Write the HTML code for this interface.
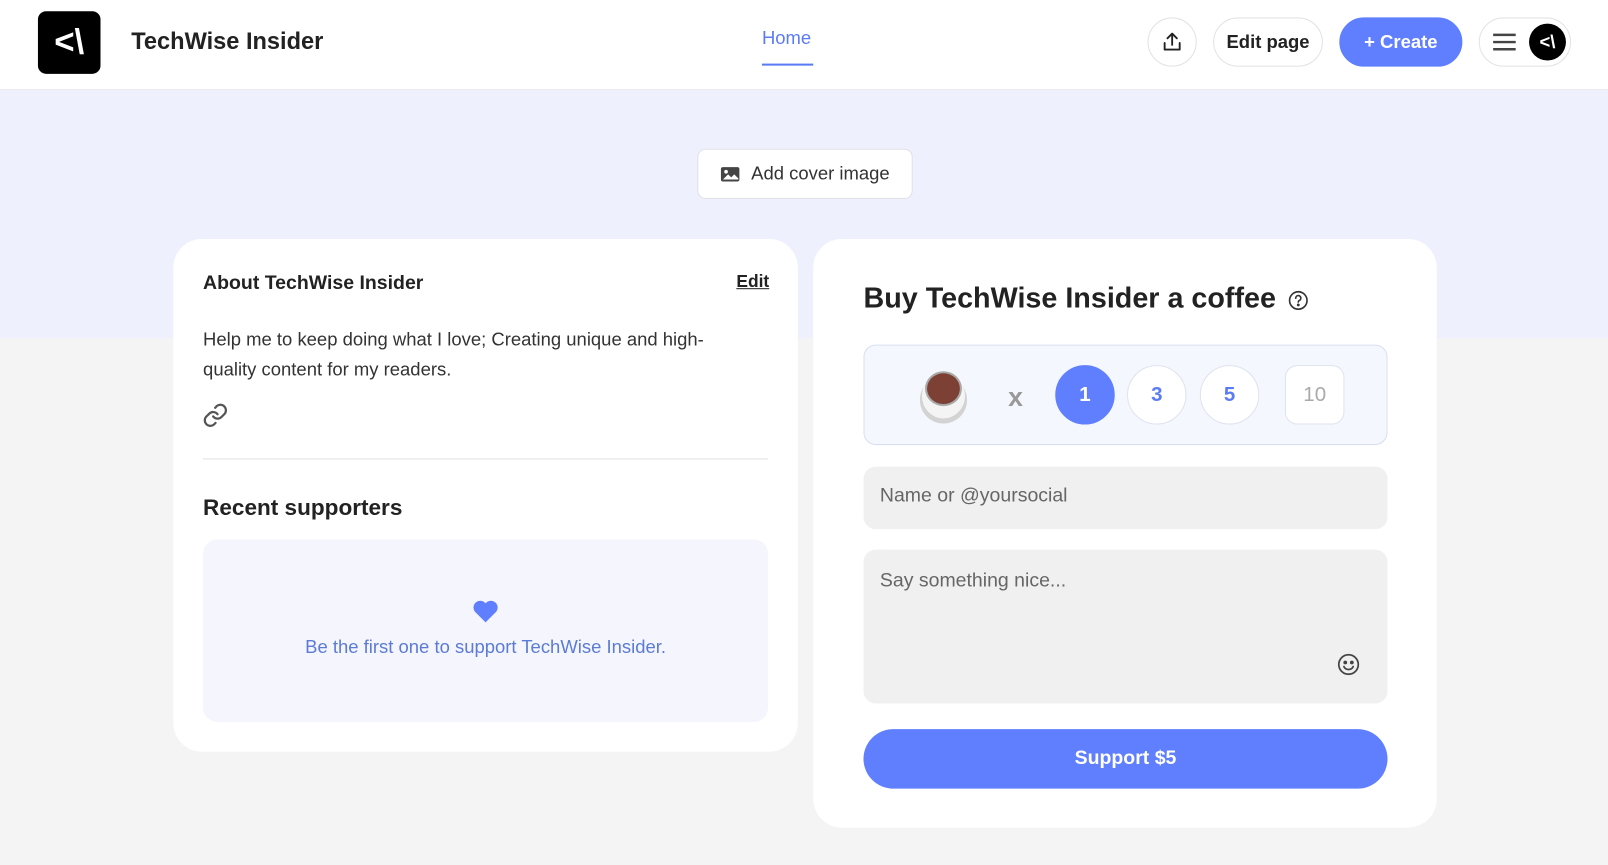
<!DOCTYPE html>
<html><head><meta charset="utf-8"><style>
*{box-sizing:border-box;margin:0;padding:0}
html,body{width:1608px;height:865px;overflow:hidden;background:#f4f4f4;font-family:"Liberation Sans",sans-serif;color:#222}
#w{width:1568px;height:843px;transform:scale(1.02551);transform-origin:0 0;position:relative;background:#f4f4f4}
.a{position:absolute}
.hdr{left:0;top:0;width:1568px;height:88px;background:#fff;border-bottom:1px solid #e6e6ec}
.band{left:0;top:88px;width:1568px;height:242px;background:#eef1fd}
.pill{position:absolute;border:1px solid #e3e3e3;border-radius:26px;background:#fff;display:flex;align-items:center;justify-content:center;font-size:18px;font-weight:600}
.card{position:absolute;background:#fff;border-radius:28px}
.num{position:absolute;top:356px;width:58px;height:58px;border-radius:50%;border:1px solid #dfe3ee;background:#fff;display:flex;align-items:center;justify-content:center;font-size:20px;font-weight:700;color:#5b7bf5}
</style></head><body><div id="w">
<div class="a hdr"></div>
<div class="a band"></div>
<div class="a" style="left:37px;top:11px;width:61px;height:61px;background:#000;border-radius:8px;color:#fff;font-size:34px;font-weight:700;display:flex;align-items:center;justify-content:center">&lt;\</div>
<div class="a" style="left:128px;top:27px;font-size:23px;font-weight:600;color:#222">TechWise Insider</div>
<div class="a" style="left:743px;top:27px;font-size:18px;color:#5b7bf5">Home</div>
<div class="a" style="left:743px;top:62px;width:50px;height:2px;background:#5b7bf5"></div>
<div class="pill" style="left:1119px;top:17px;width:48px;height:48px;border-radius:50%"><svg width="22" height="22" viewBox="0 0 24 24" fill="none" stroke="#222" stroke-width="2" stroke-linecap="round" stroke-linejoin="round"><path d="M12 15V3M7 8l5-5 5 5M4 13v7h16v-7"/></svg></div>
<div class="pill" style="left:1183px;top:17px;width:107px;height:48px">Edit page</div>
<div class="pill" style="left:1306px;top:17px;width:120px;height:48px;background:#5f7fff;border-color:#5f7fff;color:#fff">+ Create</div>
<div class="pill" style="left:1442px;top:17px;width:90px;height:48px;justify-content:flex-start;padding-left:12px">
<svg width="24" height="18" viewBox="0 0 24 18"><path d="M1 2h22M1 9h22M1 16h22" stroke="#444" stroke-width="2.4"/></svg>
<div style="margin-left:12px;width:36px;height:36px;border-radius:50%;background:#000;color:#fff;font-size:18px;font-weight:700;display:flex;align-items:center;justify-content:center">&lt;\</div></div>
<div class="pill" style="left:680px;top:145px;width:210px;height:49px;border-radius:8px;font-size:18px;font-weight:500;color:#333;border-color:#dfe1e8"><svg width="20" height="16" viewBox="0 0 20 16" style="margin-right:10px"><rect x="1" y="1" width="18" height="14" rx="2" fill="#444"/><circle cx="6" cy="5.5" r="1.8" fill="#fff"/><path d="M3 13l5-5 3 3 3-3 4 4v1z" fill="#fff"/></svg>Add cover image</div>

<div class="card" style="left:169px;top:233px;width:609px;height:500px"></div>
<div class="a" style="left:198px;top:266px;font-size:19px;font-weight:600">About TechWise Insider</div>
<div class="a" style="left:718px;top:265px;font-size:17px;font-weight:600;text-decoration:underline">Edit</div>
<div class="a" style="left:198px;top:317px;width:520px;font-size:18px;line-height:29px;color:#333">Help me to keep doing what I love; Creating unique and high-quality content for my readers.</div>
<svg class="a" style="left:197px;top:392px" width="26" height="26" viewBox="0 0 24 24" fill="none" stroke="#555" stroke-width="2" stroke-linecap="round"><path d="M10 13a5 5 0 0 0 7.5.5l3-3a5 5 0 0 0-7-7l-1.7 1.7"/><path d="M14 11a5 5 0 0 0-7.5-.5l-3 3a5 5 0 0 0 7 7l1.7-1.7"/></svg>
<div class="a" style="left:198px;top:447px;width:551px;height:1px;background:#e2e2e2"></div>
<div class="a" style="left:198px;top:482px;font-size:22px;font-weight:600">Recent supporters</div>
<div class="a" style="left:198px;top:526px;width:551px;height:178px;border-radius:14px;background:#f5f6fd"></div>
<svg class="a" style="left:460px;top:584px" width="27" height="24" viewBox="0 0 24 22"><path d="M12 21L2.5 11.5A5.5 5.5 0 0 1 12 4a5.5 5.5 0 0 1 9.5 7.5z" fill="#5f7fff"/></svg>
<div class="a" style="left:198px;top:621px;width:551px;text-align:center;font-size:18px;color:#5b7bd5">Be the first one to support TechWise Insider.</div>

<div class="card" style="left:793px;top:233px;width:608px;height:574px"></div>
<div class="a" style="left:842px;top:275px;font-size:28px;font-weight:600;color:#222">Buy TechWise Insider a coffee</div>
<svg class="a" style="left:1256px;top:283px" width="20" height="20" viewBox="0 0 20 20" fill="none" stroke="#333" stroke-width="1.6"><circle cx="10" cy="10" r="8.5"/><path d="M7.5 7.8a2.5 2.5 0 1 1 3.3 2.3c-.6.3-.8.7-.8 1.4" stroke-linecap="round"/><circle cx="10" cy="14.3" r=".6" fill="#333"/></svg>
<div class="a" style="left:842px;top:336px;width:511px;height:98px;border-radius:12px;border:1px solid #d9dff0;background:#f5f7fe"></div>
<svg class="a" style="left:895px;top:358px" width="52" height="56" viewBox="0 0 52 56"><ellipse cx="25" cy="32" rx="23" ry="23" fill="#d3d3d3"/><ellipse cx="25" cy="28" rx="21" ry="22" fill="#f4f4f4"/><ellipse cx="25" cy="21" rx="18" ry="17" fill="#a8a8a8"/><ellipse cx="25" cy="21" rx="16" ry="15" fill="#7c4034"/></svg>
<div class="a" style="left:983px;top:372px;font-size:26px;font-weight:700;color:#999">x</div>
<div class="num" style="left:1029px;background:#5f7fff;border-color:#5f7fff;color:#fff">1</div>
<div class="num" style="left:1099px">3</div>
<div class="num" style="left:1170px">5</div>
<div class="num" style="left:1253px;border-radius:12px;color:#aaa;font-weight:400">10</div>
<div class="a" style="left:842px;top:455px;width:511px;height:61px;border-radius:12px;background:#f0f0f0;padding:18px 16px;font-size:19px;color:#666">Name or @yoursocial</div>
<div class="a" style="left:842px;top:536px;width:511px;height:150px;border-radius:12px;background:#f0f0f0;padding:20px 16px;font-size:19px;color:#666">Say something nice...</div>
<svg class="a" style="left:1304px;top:637px" width="22" height="22" viewBox="0 0 22 22" fill="none" stroke="#444" stroke-width="1.7"><circle cx="11" cy="11" r="9.5"/><circle cx="7.8" cy="9" r="1" fill="#444"/><circle cx="14.2" cy="9" r="1" fill="#444"/><path d="M6.5 13a5 5 0 0 0 9 0" stroke-linecap="round"/></svg>
<div class="a" style="left:842px;top:711px;width:511px;height:58px;border-radius:29px;background:#5f7fff;color:#fff;font-size:19px;font-weight:700;display:flex;align-items:center;justify-content:center">Support $5</div>
</div></body></html>
